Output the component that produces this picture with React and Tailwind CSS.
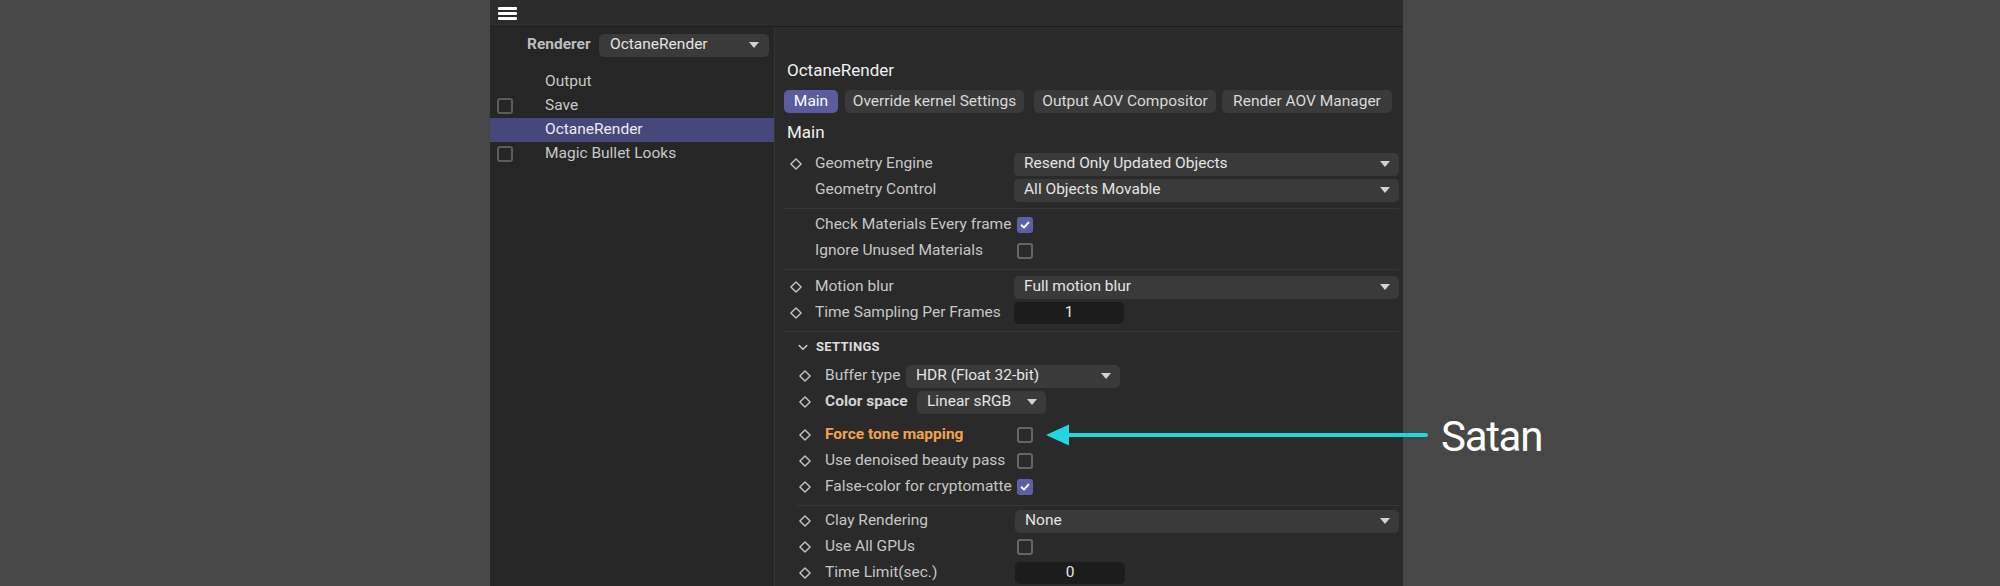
import React from "react";

const Diamond = () => (
  <svg width="12" height="12" viewBox="0 0 12 12" className="shrink-0">
    <path d="M6 0.9 L11.1 6 L6 11.1 L0.9 6 Z" fill="none" stroke="#c4c4c4" strokeWidth="1.4" strokeLinejoin="round" />
  </svg>
);

const Caret = () => (
  <svg width="10" height="6" viewBox="0 0 10 6" className="shrink-0">
    <polygon points="0,0 10,0 5,6" fill="#d2d2d2" />
  </svg>
);

const Dropdown = ({ value, className = "" }) => (
  <div className={`flex h-[23px] items-center justify-between rounded-[5px] bg-[#3a3a3a] pl-[10px] pr-[9px] text-[#e4e4e4] ${className}`}>
    <span className="truncate">{value}</span>
    <Caret />
  </div>
);

const NumBox = ({ value }) => (
  <div className="flex h-[22px] w-[110px] items-center justify-center rounded-[5px] bg-[#1c1c1c] text-[#e6e6e6]">{value}</div>
);

const Check = ({ checked, className = "" }) =>
  checked ? (
    <div className={`flex h-[16px] w-[16px] items-center justify-center rounded-[3px] bg-[#5d5fa8] ${className}`}>
      <svg width="12" height="12" viewBox="0 0 12 12">
        <path d="M2.6 6.3 L5 8.6 L9.4 3.6" fill="none" stroke="#ffffff" strokeWidth="1.9" strokeLinecap="round" strokeLinejoin="round" />
      </svg>
    </div>
  ) : (
    <div className={`h-[16px] w-[16px] rounded-[3px] border-2 border-[#666666] ${className}`} />
  );

const Row = ({ diamond = true, label, children, labelW = "w-[199px]", slotW = "w-[31px]", labelClass = "text-[#c6c6c6]" }) => (
  <div className="flex h-[26px] items-center">
    <div className={`flex ${slotW} shrink-0 items-center pl-[6px]`}>{diamond && <Diamond />}</div>
    <div className={`${labelW} shrink-0 truncate ${labelClass}`}>{label}</div>
    <div className="flex flex-1 items-center">{children}</div>
  </div>
);

const SRow = (props) => <Row slotW="w-[32px]" labelW="w-[190px]" {...props} />;

const Sep = ({ className = "" }) => <div className={`h-px bg-[#363636] ${className}`} />;

export default function App() {
  return (
    <div className="relative h-[586px] w-[2000px] overflow-hidden bg-[#474747] font-['Roboto','Inter',sans-serif] text-[15.5px]">
      <div className="ml-[490px] flex h-full w-[913px] flex-col bg-[#282828]">
        {/* top bar */}
        <div className="flex h-[27px] shrink-0 items-center border-b border-[#1d1d1d] bg-[#2c2c2c] pl-[8px]">
          <div className="flex flex-col gap-[2px]">
            <div className="h-[3px] w-[19px] rounded-[1px] bg-white" />
            <div className="h-[3px] w-[19px] rounded-[1px] bg-white" />
            <div className="h-[3px] w-[19px] rounded-[1px] bg-white" />
          </div>
        </div>
        <div className="flex flex-1">
          {/* sidebar */}
          <div className="w-[285px] shrink-0 border-r border-[#353535] bg-[#262626] pt-[6px]">
            <div className="flex h-[24px] items-center pl-[37px]">
              <div className="w-[72px] font-bold text-[#bdbdbd]">Renderer</div>
              <Dropdown value="OctaneRender" className="w-[170px] pl-[11px] pr-[10px]" />
            </div>
            <div className="mt-[13px] flex flex-col text-[#c8c8c8]">
              <div className="flex h-[24px] items-center pl-[55px]">Output</div>
              <div className="flex h-[24px] items-center">
                <div className="ml-[7px] h-[16px] w-[16px] rounded-[3px] border-2 border-[#5c5c5c]" />
                <span className="ml-[32px]">Save</span>
              </div>
              <div className="flex h-[24px] items-center bg-[#46487c] pl-[55px] text-[#ececec]">OctaneRender</div>
              <div className="flex h-[24px] items-center">
                <div className="ml-[7px] h-[16px] w-[16px] rounded-[3px] border-2 border-[#5c5c5c]" />
                <span className="ml-[32px]">Magic Bullet Looks</span>
              </div>
            </div>
          </div>
          {/* main */}
          <div className="flex flex-1 flex-col bg-[#2a2a2a] pl-[9px] pr-[4px] pt-[33px]">
            <div className="ml-[3px] h-[20px] text-[17px] leading-[20px] text-[#f0f0f0]">OctaneRender</div>
            <div className="mt-[10px] flex h-[23px]">
              <div className="flex w-[54px] items-center justify-center rounded-[5px] bg-[#5a5c9f] text-white">Main</div>
              <div className="ml-[7px] flex w-[179px] items-center justify-center rounded-[5px] bg-[#3a3a3a] text-[#d8d8d8]">Override kernel Settings</div>
              <div className="ml-[10px] flex w-[182px] items-center justify-center rounded-[5px] bg-[#3a3a3a] text-[#d8d8d8]">Output AOV Compositor</div>
              <div className="ml-[6px] flex w-[170px] items-center justify-center rounded-[5px] bg-[#3a3a3a] text-[#d8d8d8]">Render AOV Manager</div>
            </div>
            <div className="ml-[3px] mt-[9px] h-[20px] text-[17px] leading-[20px] text-[#f0f0f0]">Main</div>

            <div className="mt-[9px]">
              <Row label="Geometry Engine"><Dropdown value="Resend Only Updated Objects" className="w-full" /></Row>
              <Row diamond={false} label="Geometry Control"><Dropdown value="All Objects Movable" className="w-full" /></Row>
            </div>
            <Sep className="mt-[5px]" />
            <div className="mt-[3px]">
              <Row diamond={false} label="Check Materials Every frame"><Check checked className="ml-[3px]" /></Row>
              <Row diamond={false} label="Ignore Unused Materials"><Check className="ml-[3px]" /></Row>
            </div>
            <Sep className="mt-[5px]" />
            <div className="mt-[4px]">
              <Row label="Motion blur"><Dropdown value="Full motion blur" className="w-full" /></Row>
              <Row label="Time Sampling Per Frames"><NumBox value="1" /></Row>
            </div>
            <Sep className="mt-[5px]" />

            {/* settings */}
            <div className="mt-[5px] pl-[9px]">
              <div className="flex h-[20px] items-center">
                <svg width="10" height="7" viewBox="0 0 10 7" className="ml-[5px] mr-[8px]">
                  <path d="M1.2 1.5 L5 5.3 L8.8 1.5" fill="none" stroke="#cfcfcf" strokeWidth="1.5" strokeLinecap="round" strokeLinejoin="round" />
                </svg>
                <span className="text-[13px] font-bold tracking-[0.3px] text-[#dedede]">SETTINGS</span>
              </div>
              <div className="mt-[6px]">
                <div className="flex h-[26px] items-center">
                  <div className="flex w-[32px] shrink-0 items-center pl-[6px]"><Diamond /></div>
                  <div className="w-[81px] shrink-0 text-[#c6c6c6]">Buffer type</div>
                  <Dropdown value="HDR (Float 32-bit)" className="w-[214px]" />
                </div>
                <div className="flex h-[26px] items-center">
                  <div className="flex w-[32px] shrink-0 items-center pl-[6px]"><Diamond /></div>
                  <div className="w-[92px] shrink-0 font-bold text-[#d2d2d2]">Color space</div>
                  <Dropdown value="Linear sRGB" className="w-[129px]" />
                </div>
              </div>
              <div className="mt-[7px]">
                <SRow label="Force tone mapping" labelClass="font-bold text-[#f2a24c]"><Check className="ml-[2px]" /></SRow>
                <SRow label="Use denoised beauty pass"><Check className="ml-[2px]" /></SRow>
                <SRow label="False-color for cryptomatte"><Check checked className="ml-[2px]" /></SRow>
              </div>
              <Sep className="ml-[4px] mt-[5px]" />
              <div className="mt-[2px]">
                <SRow label="Clay Rendering"><Dropdown value="None" className="w-full" /></SRow>
                <SRow label="Use All GPUs"><Check className="ml-[2px]" /></SRow>
                <SRow label="Time Limit(sec.)"><NumBox value="0" /></SRow>
              </div>
            </div>
          </div>
        </div>
      </div>

      {/* annotation arrow */}
      <svg className="absolute left-[1044px] top-[423px]" width="386" height="24" viewBox="0 0 386 24">
        <line x1="20" y1="12" x2="382" y2="12" stroke="#1fd7de" strokeWidth="4" strokeLinecap="round" />
        <polygon points="2,12 25,1.5 25,22.5" fill="#1fd7de" />
      </svg>
      <div className="absolute left-[1441px] top-[414px] h-[46px] text-[42px] leading-[46px] tracking-[-1.3px] text-white">Satan</div>
    </div>
  );
}
